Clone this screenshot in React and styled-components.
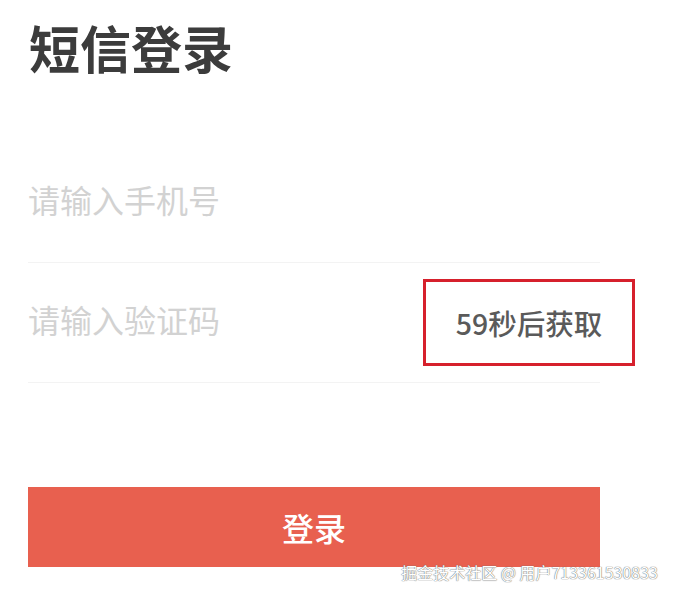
import React from "react";
import styled, { createGlobalStyle } from "styled-components";

const GlobalStyle = createGlobalStyle`
  html, body {
    margin: 0;
    padding: 0;
    background: #ffffff;
  }
  body {
    font-family: "Noto Sans CJK SC", "Noto Sans", sans-serif;
  }
`;

const Page = styled.div`
  position: relative;
  width: 674px;
  height: 598px;
  overflow: hidden;
  padding: 0 74px 0 28px;
  box-sizing: border-box;
`;

const Title = styled.h1`
  margin: 0;
  padding-top: 21px;
  padding-left: 1px;
  height: 143px;
  box-sizing: border-box;
  font-size: 51px;
  line-height: 52px;
  font-weight: 600;
  color: #3c3c3c;
`;

const Field = styled.div`
  display: flex;
  align-items: center;
  height: 120px;
  padding-bottom: 8px;
  border-bottom: 1px solid #f3f3f3;
  box-sizing: border-box;
`;

const Input = styled.input`
  flex: 1;
  min-width: 0;
  border: none;
  outline: none;
  padding: 0;
  background: transparent;
  font-family: inherit;
  font-size: 32px;
  color: #333;

  &::placeholder {
    color: #d2d2d2;
  }
`;

// the red frame marks the countdown button in the original capture
const CodeButton = styled.div`
  display: flex;
  align-items: center;
  justify-content: center;
  width: 212px;
  height: 87px;
  margin-right: -35px;
  margin-top: 8px;
  box-sizing: border-box;
  border: 3px solid #d6202c;
  font-size: 28.5px;
  font-weight: 500;
  color: #5a5a5a;
`;

const Submit = styled.button`
  display: block;
  width: 100%;
  height: 80px;
  margin-top: 104px;
  border: none;
  padding: 0;
  background: #e8604f;
  color: #ffffff;
  font-family: inherit;
  font-size: 32px;
  font-weight: 500;
`;

const Watermark = styled.div`
  position: absolute;
  right: 16px;
  bottom: 16px;
  font-size: 16px;
  line-height: 20px;
  color: #ffffff;
  white-space: nowrap;
  text-shadow: 0 0 1px #666, 0 0 1px #777;
`;

export default function App() {
  return (
    <>
      <GlobalStyle />
      <Page>
        <Title>短信登录</Title>
        <Field>
          <Input placeholder="请输入手机号" />
        </Field>
        <Field>
          <Input placeholder="请输入验证码" />
          <CodeButton>59秒后获取</CodeButton>
        </Field>
        <Submit>登录</Submit>
        <Watermark>掘金技术社区 @ 用户713361530833</Watermark>
      </Page>
    </>
  );
}
